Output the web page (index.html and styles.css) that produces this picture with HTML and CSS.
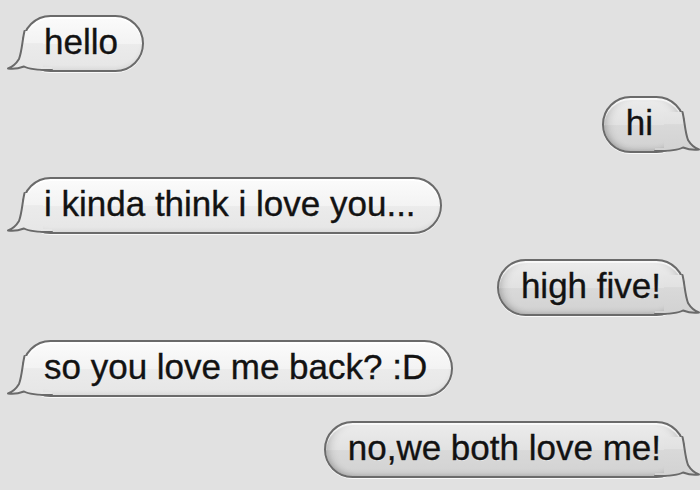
FILE: index.html
```html
<!DOCTYPE html>
<html>
<head>
<meta charset="utf-8">
<link rel="stylesheet" href="styles.css">
</head>
<body>
<svg class="defs" aria-hidden="true">
  <defs>
    <linearGradient id="gIn" gradientUnits="userSpaceOnUse" x1="0" y1="-17" x2="0" y2="40">
      <stop offset="0" stop-color="#fbfbfb"/>
      <stop offset="0.5" stop-color="#f3f3f3"/>
      <stop offset="0.52" stop-color="#ebebeb"/>
      <stop offset="1" stop-color="#e6e6e6"/>
    </linearGradient>
    <linearGradient id="gOut" gradientUnits="userSpaceOnUse" x1="0" y1="-17" x2="0" y2="40">
      <stop offset="0" stop-color="#ececec"/>
      <stop offset="0.5" stop-color="#e2e2e2"/>
      <stop offset="0.52" stop-color="#d9d9d9"/>
      <stop offset="1" stop-color="#d2d2d2"/>
    </linearGradient>
  </defs>
</svg>
<div class="chat">
  <div class="bubble in">
    <svg class="tail" width="46" height="41" viewBox="0 0 46 41"><path class="tf" d="M18.5,0 C16.5,8 16,20 13,28 C10,33 6,36 2,37.5 C8,38.5 14,37 18,35.5 C22,38 28,39 46,39 L46,36 L37,36 L37,0 Z"/><path class="ts" d="M18.5,0 C16.5,8 16,20 13,28 C10,33 6,36 2,37.5 C8,38.5 14,37 18,35.5 C22,38 28,39 46,39"/></svg>
    <span class="txt">hello</span>
  </div>
  <div class="bubble out short">
    <svg class="tail" width="46" height="41" viewBox="0 0 46 41"><path class="tf" d="M18.5,0 C16.5,8 16,20 13,28 C10,33 6,36 2,37.5 C8,38.5 14,37 18,35.5 C22,38 28,39 46,39 L46,36 L37,36 L37,0 Z"/><path class="ts" d="M18.5,0 C16.5,8 16,20 13,28 C10,33 6,36 2,37.5 C8,38.5 14,37 18,35.5 C22,38 28,39 46,39"/></svg>
    <span class="txt">hi</span>
  </div>
  <div class="bubble in">
    <svg class="tail" width="46" height="41" viewBox="0 0 46 41"><path class="tf" d="M18.5,0 C16.5,8 16,20 13,28 C10,33 6,36 2,37.5 C8,38.5 14,37 18,35.5 C22,38 28,39 46,39 L46,36 L37,36 L37,0 Z"/><path class="ts" d="M18.5,0 C16.5,8 16,20 13,28 C10,33 6,36 2,37.5 C8,38.5 14,37 18,35.5 C22,38 28,39 46,39"/></svg>
    <span class="txt">i kinda think i love you...</span>
  </div>
  <div class="bubble out">
    <svg class="tail" width="46" height="41" viewBox="0 0 46 41"><path class="tf" d="M18.5,0 C16.5,8 16,20 13,28 C10,33 6,36 2,37.5 C8,38.5 14,37 18,35.5 C22,38 28,39 46,39 L46,36 L37,36 L37,0 Z"/><path class="ts" d="M18.5,0 C16.5,8 16,20 13,28 C10,33 6,36 2,37.5 C8,38.5 14,37 18,35.5 C22,38 28,39 46,39"/></svg>
    <span class="txt">high five!</span>
  </div>
  <div class="bubble in">
    <svg class="tail" width="46" height="41" viewBox="0 0 46 41"><path class="tf" d="M18.5,0 C16.5,8 16,20 13,28 C10,33 6,36 2,37.5 C8,38.5 14,37 18,35.5 C22,38 28,39 46,39 L46,36 L37,36 L37,0 Z"/><path class="ts" d="M18.5,0 C16.5,8 16,20 13,28 C10,33 6,36 2,37.5 C8,38.5 14,37 18,35.5 C22,38 28,39 46,39"/></svg>
    <span class="txt">so you love me back? :D</span>
  </div>
  <div class="bubble out">
    <svg class="tail" width="46" height="41" viewBox="0 0 46 41"><path class="tf" d="M18.5,0 C16.5,8 16,20 13,28 C10,33 6,36 2,37.5 C8,38.5 14,37 18,35.5 C22,38 28,39 46,39 L46,36 L37,36 L37,0 Z"/><path class="ts" d="M18.5,0 C16.5,8 16,20 13,28 C10,33 6,36 2,37.5 C8,38.5 14,37 18,35.5 C22,38 28,39 46,39"/></svg>
    <span class="txt">no,we both love me!</span>
  </div>
</div>
</body>
</html>
```

FILE: styles.css
```css
html, body {
  margin: 0;
  padding: 0;
  background: #e1e1e1;
  width: 700px;
  height: 490px;
  overflow: hidden;
}

.defs {
  position: absolute;
  width: 0;
  height: 0;
}

.chat {
  display: flex;
  flex-direction: column;
  gap: 24.2px;
  padding: 15px 15px 0 22px;
}

.bubble {
  position: relative;
  box-sizing: border-box;
  height: 57px;
  border: 2px solid #6a6a6a;
  border-radius: 29px;
  font-family: "Liberation Sans", Arial, sans-serif;
  font-size: 35px;
  line-height: 50px;
  padding: 0 24px 3px 20px;
  color: #121212;
  white-space: nowrap;
  box-shadow: 0 1px 0 rgba(255, 255, 255, 0.8);
}

.bubble.in {
  align-self: flex-start;
  background: linear-gradient(#fbfbfb 0%, #f3f3f3 50%, #ebebeb 52%, #e6e6e6 100%);
  box-shadow: 0 1px 0 rgba(255, 255, 255, 0.8), inset 0 2px 1px rgba(255, 255, 255, 0.9), inset 0 -3px 5px -2px rgba(0, 0, 0, 0.08);
}

.bubble.out {
  align-self: flex-end;
  padding: 0 22px 3px 22px;
  background: linear-gradient(#ececec 0%, #e2e2e2 50%, #d9d9d9 52%, #d2d2d2 100%);
  box-shadow: 0 1px 0 rgba(255, 255, 255, 0.8), inset 0 2px 1px rgba(255, 255, 255, 0.8), inset 8px 0 10px -6px rgba(0, 0, 0, 0.22), inset -8px 0 10px -6px rgba(0, 0, 0, 0.22), inset 0 -4px 6px -3px rgba(0, 0, 0, 0.15);
}

.bubble.out.short {
  padding: 0 30px 3px 22px;
}

.txt {
  position: relative;
  z-index: 1;
  -webkit-text-stroke: 0.35px #121212;
  text-shadow: 0 1px 0 rgba(255, 255, 255, 0.5);
}

.tail {
  position: absolute;
  bottom: -2px;
  left: -18px;
  z-index: 0;
  overflow: visible;
}

.bubble.out .tail {
  left: auto;
  right: -18px;
  transform: scaleX(-1);
}

.tf {
  stroke: none;
}

.bubble.in .tf {
  fill: url(#gIn);
}

.bubble.out .tf {
  fill: url(#gOut);
}

.ts {
  fill: none;
  stroke: #6a6a6a;
  stroke-width: 2;
  stroke-linejoin: round;
  stroke-linecap: round;
}
```
